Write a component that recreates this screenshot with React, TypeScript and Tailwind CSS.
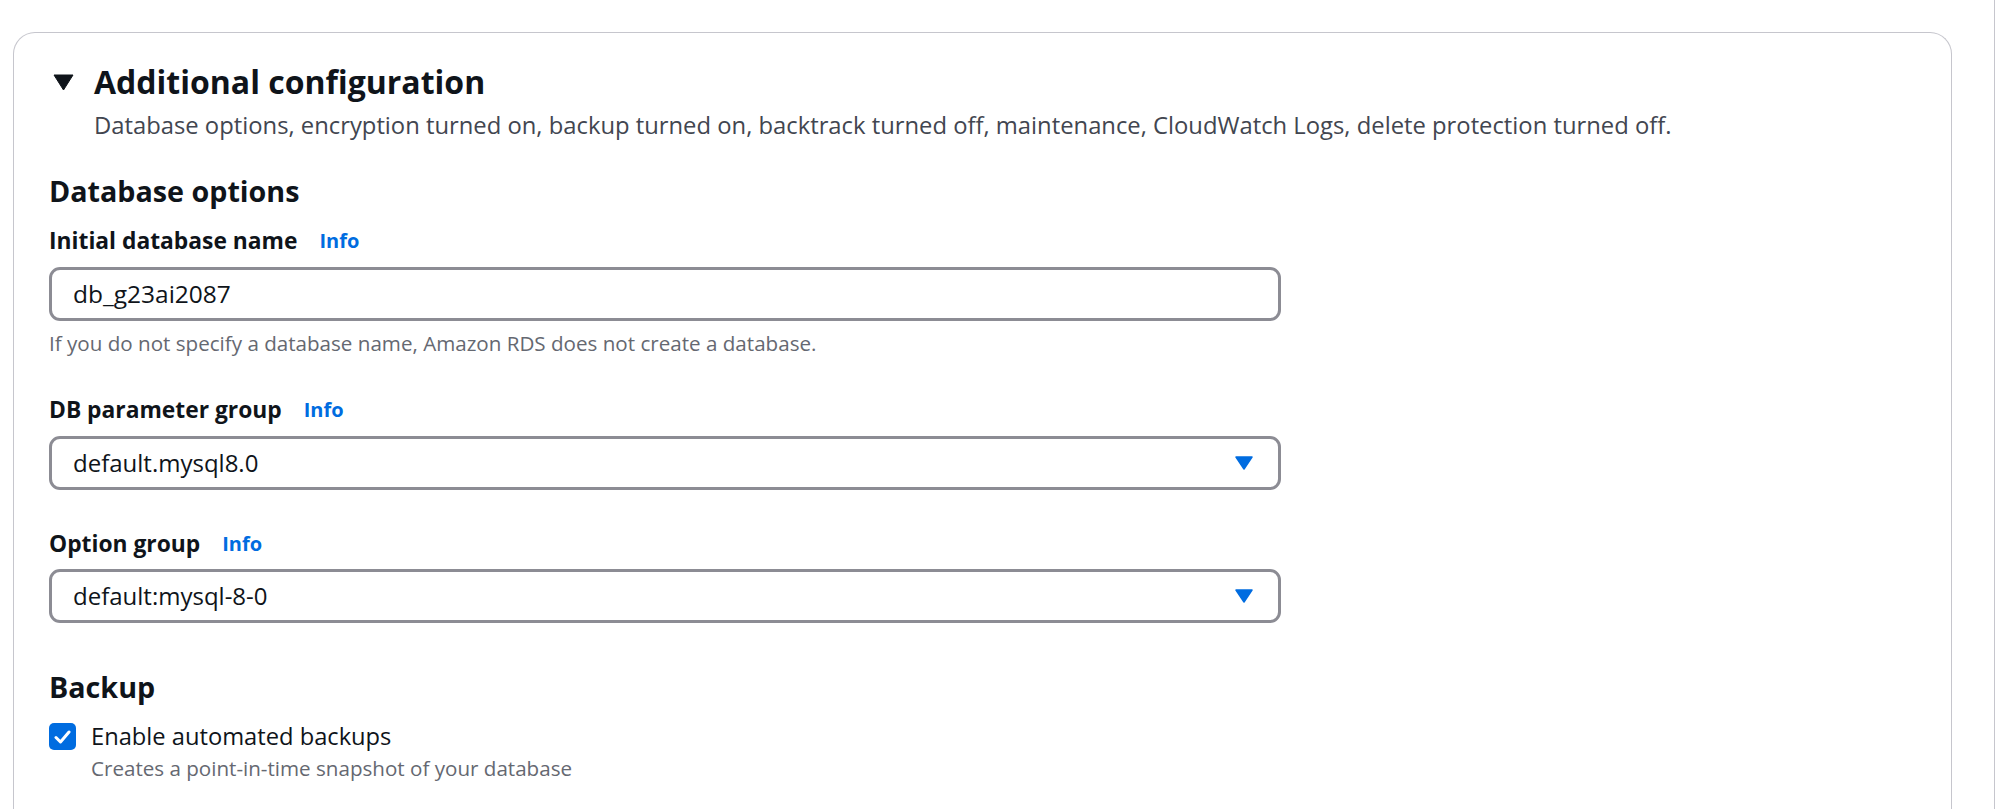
import React from 'react';

function InfoLink() {
  return <span className="text-[20px] font-bold text-[#006ce0] ml-[22px]">Info</span>;
}

function FieldLabel({ children }: { children: React.ReactNode }) {
  return (
    <div className="flex items-center text-[22.8px] leading-[30px] font-bold text-[#0f141a]">
      <span>{children}</span>
      <InfoLink />
    </div>
  );
}

function Caret() {
  return (
    <svg width="18" height="14" viewBox="0 0 18 14">
      <path d="M1 1h16L9 13z" fill="#006ce0" stroke="#006ce0" strokeWidth="1.5" strokeLinejoin="round" />
    </svg>
  );
}

function SelectBox({ value }: { value: string }) {
  return (
    <div className="flex h-[54px] w-[1232px] items-center justify-between rounded-[11px] border-[3px] border-[#8c8c94] bg-white pl-[21px] pr-[25px] text-[24px] text-[#0f141a]">
      <span>{value}</span>
      <Caret />
    </div>
  );
}

export default function App() {
  return (
    <div className="flex min-h-[809px] bg-white font-['Open_Sans',sans-serif] text-[#0f141a]">
      <div className="flex-1 pl-[13px] pt-[32px] pr-[42px]">
        <div className="h-[800px] rounded-t-[22px] border border-b-0 border-[#c6c6cd] pl-[35px] pt-[29px]">
          <div className="flex items-center">
            <svg width="21" height="17" viewBox="0 0 21 17" className="ml-[4px] mr-[20px]">
              <path d="M1 1h19L10.5 16z" fill="#0f141a" stroke="#0f141a" strokeWidth="1" strokeLinejoin="round" />
            </svg>
            <h2 className="text-[32px] leading-[40px] font-bold">Additional configuration</h2>
          </div>
          <p className="mt-[8px] pl-[45px] text-[23.8px] leading-[30px] text-[#424650]">
            Database options, encryption turned on, backup turned on, backtrack turned off, maintenance, CloudWatch Logs, delete protection turned off.
          </p>

          <h3 className="mt-[33px] text-[28.7px] leading-[36px] font-bold">Database options</h3>

          <div className="mt-[17px]">
            <FieldLabel>Initial database name</FieldLabel>
            <div className="mt-[11px] flex h-[54px] w-[1232px] items-center rounded-[11px] border-[3px] border-[#8c8c94] pl-[21px] text-[24.5px]">
              db_g23ai2087
            </div>
            <p className="mt-[9px] text-[20.6px] leading-[26px] text-[#656871]">
              If you do not specify a database name, Amazon RDS does not create a database.
            </p>
          </div>

          <div className="mt-[39px]">
            <FieldLabel>DB parameter group</FieldLabel>
            <div className="mt-[11px]">
              <SelectBox value="default.mysql8.0" />
            </div>
          </div>

          <div className="mt-[39px]">
            <FieldLabel>Option group</FieldLabel>
            <div className="mt-[10px]">
              <SelectBox value="default:mysql-8-0" />
            </div>
          </div>

          <h3 className="mt-[46px] text-[28.7px] leading-[36px] font-bold">Backup</h3>

          <div className="mt-[16px] flex items-start gap-[15px]">
            <div className="mt-[2px] flex h-[27px] w-[27px] items-center justify-center rounded-[5px] bg-[#006ce0]">
              <svg width="17" height="14" viewBox="0 0 17 14">
                <path d="M2 7.5l4.5 4.5L15 2" fill="none" stroke="white" strokeWidth="3" strokeLinecap="round" strokeLinejoin="round" />
              </svg>
            </div>
            <div>
              <div className="text-[23.7px] leading-[30px]">Enable automated backups</div>
              <div className="mt-[4px] text-[20.6px] leading-[26px] text-[#656871]">
                Creates a point-in-time snapshot of your database
              </div>
            </div>
          </div>
        </div>
      </div>
      <div className="w-[1px] bg-[#c6c6cd]" />
      <div className="w-[12px]" />
    </div>
  );
}
